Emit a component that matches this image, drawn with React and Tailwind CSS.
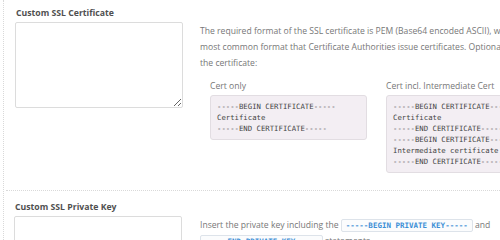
export default function App() {
  const sans = { fontFamily: '"Open Sans", "Liberation Sans", sans-serif' };
  return (
    <div className="w-[500px] h-[240px] overflow-hidden bg-white relative" style={sans}>
      <div className="ml-[3px] border-l border-dotted border-[#d9d9d9] h-[240px]">
        {/* Section 1 */}
        <div className="flex pl-[11px] pt-[7px] pb-[17px] border-b border-dotted border-[#d9d9d9] ml-[2px] mr-[-20px]">
          <div className="w-[166px] shrink-0 -ml-[2px]">
            <div className="text-[8.7px] font-bold text-[#505050] leading-[12px] h-[12px] whitespace-nowrap pl-[1px]">Custom SSL Certificate</div>
            <textarea
              readOnly
              className="mt-[3px] block w-[168px] h-[86px] border border-[#dcdcdc] rounded-[2px] bg-white outline-none"
            />
          </div>
          <div className="pl-[19px] pt-[16px] shrink-0">
            <div className="text-[8.6px] leading-[16px] text-[#777] whitespace-nowrap">
              <div>The required format of the SSL certificate is PEM (Base64 encoded ASCII), which is the</div>
              <div>most common format that Certificate Authorities issue certificates. Optionally, you can include the intermediate certificate after</div>
              <div>the certificate:</div>
            </div>
            <div className="flex gap-[19px] pl-[10px] mt-[7px]">
              <div className="w-[157px]">
                <div className="text-[8.6px] leading-[16px] text-[#777] whitespace-nowrap">Cert only</div>
                <Code lines={["-----BEGIN CERTIFICATE-----", "Certificate", "-----END CERTIFICATE-----"]} />
              </div>
              <div className="w-[157px]">
                <div className="text-[8.6px] leading-[16px] text-[#777] whitespace-nowrap">Cert incl. Intermediate Cert</div>
                <Code
                  lines={[
                    "-----BEGIN CERTIFICATE-----",
                    "Certificate",
                    "-----END CERTIFICATE-----",
                    "-----BEGIN CERTIFICATE-----",
                    "Intermediate certificate",
                    "-----END CERTIFICATE-----",
                  ]}
                />
              </div>
            </div>
          </div>
        </div>
        {/* Section 2 */}
        <div className="flex pl-[10px] pt-[10px]">
          <div className="w-[166px] shrink-0">
            <div className="text-[8.7px] font-bold text-[#505050] leading-[12px] h-[12px] whitespace-nowrap pl-[1px]">Custom SSL Private Key</div>
            <textarea
              readOnly
              className="mt-[3px] block w-[168px] h-[86px] border border-[#dcdcdc] rounded-[2px] bg-white outline-none"
            />
          </div>
          <div className="pl-[20px] pt-[16px] shrink-0 text-[8.6px] leading-[16px] text-[#777] whitespace-nowrap">
            <div>
              Insert the private key including the <InlineCode>-----BEGIN PRIVATE KEY-----</InlineCode> and
            </div>
            <div>
              <InlineCode>-----END PRIVATE KEY-----</InlineCode> statements.
            </div>
          </div>
        </div>
      </div>
    </div>
  );
}

function Code({ lines }) {
  return (
    <div
      className="mt-[1px] bg-[#f3eef3] border border-[#e2dde2] rounded-[3px] px-[6px] py-[5px] text-[7.3px] leading-[11px] text-[#444] whitespace-nowrap"
      style={{ fontFamily: '"DejaVu Sans Mono", "Liberation Mono", monospace' }}
    >
      {lines.map((l, i) => (
        <div key={i}>{l}</div>
      ))}
    </div>
  );
}

function InlineCode({ children }) {
  return (
    <span
      className="inline-block border border-[#dde3ea] rounded-[2px] bg-[#fbfcfd] px-[4px] text-[7.5px] leading-[11px] text-[#3b8fd6] font-semibold"
      style={{ fontFamily: '"DejaVu Sans Mono", "Liberation Mono", monospace' }}
    >
      {children}
    </span>
  );
}
